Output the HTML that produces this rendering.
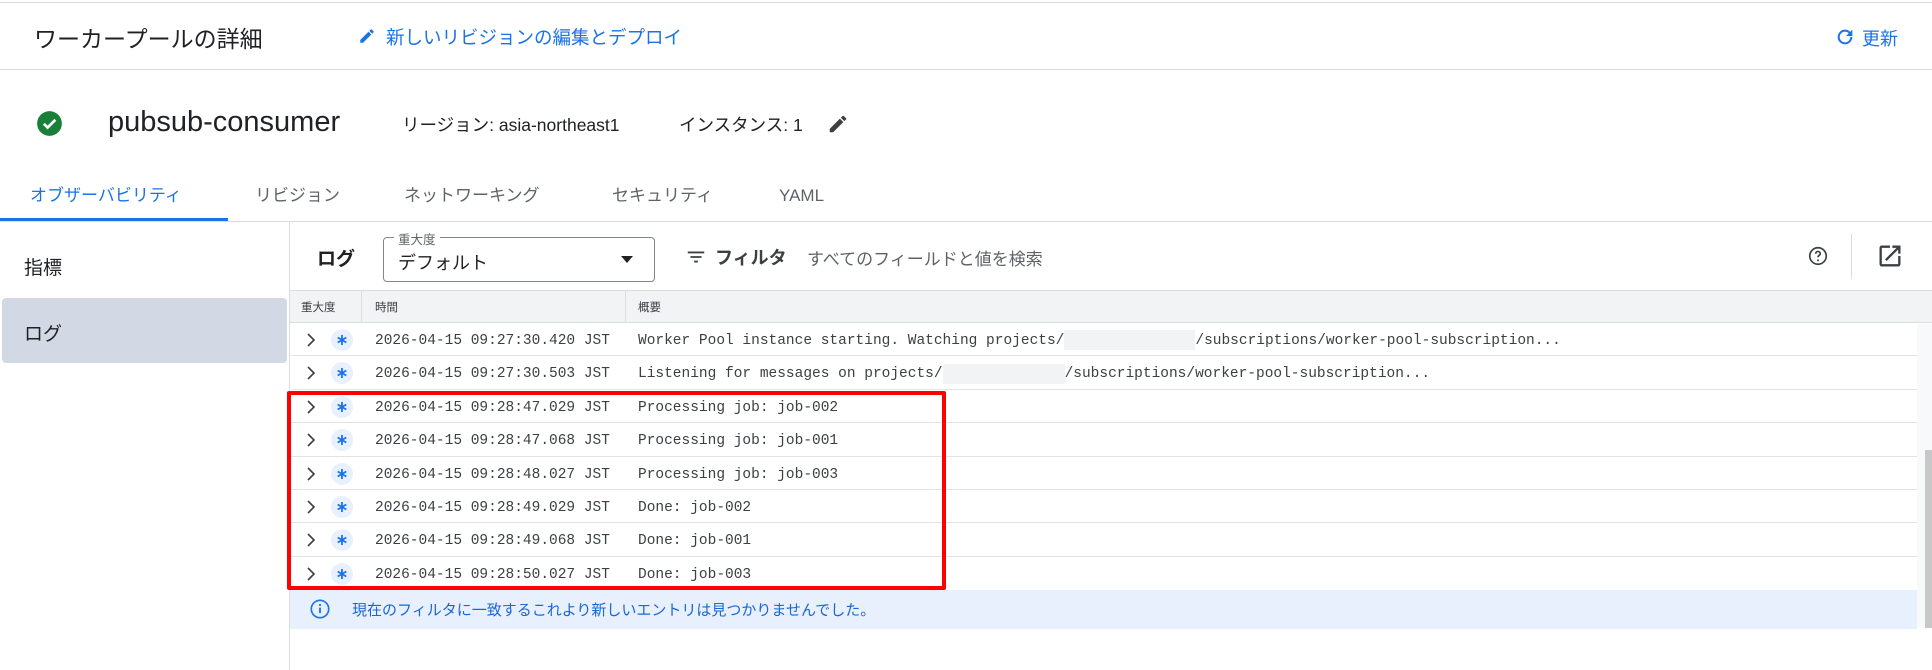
<!DOCTYPE html>
<html><head><meta charset="utf-8"><style>
*{box-sizing:border-box;margin:0;padding:0}
body{width:1932px;height:670px;overflow:hidden;background:#fff;font-family:"Liberation Sans","Noto Sans CJK JP",sans-serif;color:#202124;position:relative}
.a{position:absolute;white-space:nowrap}
.tab{position:absolute;top:184px;height:24px;line-height:24px;font-size:17px;color:#5f6368;white-space:nowrap}
.mono{font-family:"Liberation Mono","Noto Sans CJK JP",monospace;font-size:14.5px;color:#3c4043}
.row{position:absolute;left:291px;width:1626px;height:33.4px;border-bottom:1px solid #e3e3e3}
.row .chev{position:absolute;left:14px;top:9px}
.row .sev{position:absolute;left:40px;top:6px;width:22px;height:22px;border-radius:50%;background:#e8f0fe}
.row .sev svg{position:absolute;left:5px;top:5px}
.row .t{position:absolute;left:84px;top:2px;height:33px;line-height:33px}
.row .m{position:absolute;left:347px;top:2px;height:33px;line-height:33px}
</style></head><body>
<div class="a" style="left:0;top:2px;width:1932px;height:1px;background:#dadce0"></div>
<div class="a" style="left:34px;top:20px;font-size:23px;color:#202124">ワーカープールの詳細</div>
<svg class="a" style="left:358px;top:27px" width="18" height="18" viewBox="0 0 24 24"><path fill="#1a73e8" d="M3 17.25V21h3.75L17.81 9.94l-3.75-3.75L3 17.25zM20.71 7.04a1 1 0 000-1.41l-2.34-2.34a1 1 0 00-1.41 0l-1.83 1.83 3.75 3.75 1.83-1.83z"/></svg>
<div class="a" style="left:386px;top:24px;font-size:18.5px;color:#1a73e8">新しいリビジョンの編集とデプロイ</div>
<svg class="a" style="left:1834px;top:26px" width="22" height="22" viewBox="0 0 24 24"><path fill="#1a73e8" d="M17.65 6.35A7.96 7.96 0 0 0 12 4a8 8 0 1 0 8 8h-2.2a5.8 5.8 0 1 1-1.7-4.1L13 11h7V4l-2.35 2.35z"/></svg>
<div class="a" style="left:1862px;top:25px;font-size:18px;color:#1a73e8">更新</div>
<div class="a" style="left:0;top:69px;width:1932px;height:1px;background:#dadce0"></div>

<svg class="a" style="left:36px;top:110px" width="27" height="27" viewBox="0 0 24 24"><circle cx="12" cy="12" r="11" fill="#188038"/><path d="M7 12.3l3.3 3.3L17.2 8.7" stroke="#fff" stroke-width="2.4" fill="none"/></svg>
<div class="a" style="left:108px;top:106px;font-size:29px;color:#202124">pubsub-consumer</div>
<div class="a" style="left:402px;top:112px;font-size:17.5px">リージョン: asia-northeast1</div>
<div class="a" style="left:679px;top:112px;font-size:17.5px">インスタンス: 1</div>
<svg class="a" style="left:827px;top:113px" width="22" height="22" viewBox="0 0 24 24"><path fill="#3c4043" d="M3 17.25V21h3.75L17.81 9.94l-3.75-3.75L3 17.25zM20.71 7.04a1 1 0 000-1.41l-2.34-2.34a1 1 0 00-1.41 0l-1.83 1.83 3.75 3.75 1.83-1.83z"/></svg>

<div class="tab" style="left:30px;color:#1a73e8">オブザーバビリティ</div>
<div class="tab" style="left:255px">リビジョン</div>
<div class="tab" style="left:404px">ネットワーキング</div>
<div class="tab" style="left:612px">セキュリティ</div>
<div class="tab" style="left:779px;font-family:'Liberation Sans',sans-serif">YAML</div>
<div class="a" style="left:0;top:221px;width:1932px;height:1px;background:#dadce0"></div>
<div class="a" style="left:0;top:218px;width:228px;height:3px;background:#1a73e8"></div>

<div class="a" style="left:289px;top:222px;width:1px;height:448px;background:#dadce0"></div>
<div class="a" style="left:24px;top:253px;font-size:19px">指標</div>
<div class="a" style="left:2px;top:298px;width:285px;height:65px;background:#d3d9e4;border-radius:4px"></div>
<div class="a" style="left:24px;top:319px;font-size:19px">ログ</div>

<div class="a" style="left:317px;top:244px;font-size:19px;font-weight:bold">ログ</div>
<div class="a" style="left:383px;top:237px;width:272px;height:45px;border:1px solid #80868b;border-radius:4px"></div>
<div class="a" style="left:394px;top:229px;font-size:12.5px;color:#5f6368;background:#fff;padding:0 4px">重大度</div>
<div class="a" style="left:398px;top:249px;font-size:18px">デフォルト</div>
<svg class="a" style="left:620px;top:255px" width="14" height="10" viewBox="0 0 14 10"><path d="M1 1h12L7 8z" fill="#202124"/></svg>
<svg class="a" style="left:685px;top:246px" width="22" height="22" viewBox="0 0 24 24"><path fill="#3c4043" d="M3 6h18v2H3zM6 11h12v2H6zM10 16h4v2h-4z"/></svg>
<div class="a" style="left:715px;top:244px;font-size:18px;font-weight:bold;color:#3c4043">フィルタ</div>
<div class="a" style="left:807px;top:245px;font-size:17px;color:#5f6368">すべてのフィールドと値を検索</div>
<svg class="a" style="left:1807px;top:245px" width="22" height="22" viewBox="0 0 24 24"><circle cx="12" cy="12" r="9" stroke="#3c4043" stroke-width="1.8" fill="none"/><path d="M9.5 9.5a2.5 2.5 0 115 0c0 1.7-2.5 1.8-2.5 3.8" stroke="#3c4043" stroke-width="1.8" fill="none"/><circle cx="12" cy="16.8" r="1.1" fill="#3c4043"/></svg>
<div class="a" style="left:1851px;top:234px;width:1px;height:45px;background:#dadce0"></div>
<svg class="a" style="left:1876px;top:242px" width="28" height="28" viewBox="0 0 24 24"><path fill="#3c4043" d="M19 19H5V5h7V3H5a2 2 0 00-2 2v14a2 2 0 002 2h14a2 2 0 002-2v-7h-2v7zM14 3v2h3.59l-9.83 9.83 1.41 1.41L19 6.41V10h2V3h-7z"/></svg>

<div class="a" style="left:290px;top:290px;width:1642px;height:33px;background:#f1f3f4;border-top:1px solid #dadce0;border-bottom:1px solid #dadce0"></div>
<div class="a" style="left:301px;top:299px;font-size:11.5px;color:#3c4043">重大度</div>
<div class="a" style="left:361px;top:291px;width:1px;height:31px;background:#dadce0"></div>
<div class="a" style="left:375px;top:299px;font-size:11.5px;color:#3c4043">時間</div>
<div class="a" style="left:625px;top:291px;width:1px;height:31px;background:#dadce0"></div>
<div class="a" style="left:638px;top:299px;font-size:11.5px;color:#3c4043">概要</div>

<div class="a" style="left:1917px;top:324px;width:15px;height:304px;background:#f8f9fa"></div>
<div class="a" style="left:1925px;top:450px;width:7px;height:178px;background:#c8c8c8"></div>

<svg width="0" height="0" style="position:absolute"><defs><symbol id="ast" viewBox="0 0 12 12"><path d="M6 1v10M1.7 3.5l8.6 5M1.7 8.5l8.6-5" stroke="#1a73e8" stroke-width="1.8"/></symbol><symbol id="chv" viewBox="0 0 12 16"><path d="M3 2l6 6-6 6" stroke="#3c4043" stroke-width="1.6" fill="none"/></symbol></defs></svg>

<div class="row mono" style="top:323px"><svg class="chev" width="12" height="16"><use href="#chv"/></svg><div class="sev"><svg width="12" height="12"><use href="#ast"/></svg></div><div class="t">2026-04-15 09:27:30.420 JST</div><div class="m">Worker Pool instance starting. Watching projects/<span style="display:inline-block;width:131px;height:20px;background:#f1f3f4;vertical-align:middle"></span>/subscriptions/worker-pool-subscription...</div></div>
<div class="row mono" style="top:356.4px"><svg class="chev" width="12" height="16"><use href="#chv"/></svg><div class="sev"><svg width="12" height="12"><use href="#ast"/></svg></div><div class="t">2026-04-15 09:27:30.503 JST</div><div class="m">Listening for messages on projects/<span style="display:inline-block;width:122px;height:20px;background:#f1f3f4;vertical-align:middle"></span>/subscriptions/worker-pool-subscription...</div></div>
<div class="row mono" style="top:389.8px"><svg class="chev" width="12" height="16"><use href="#chv"/></svg><div class="sev"><svg width="12" height="12"><use href="#ast"/></svg></div><div class="t">2026-04-15 09:28:47.029 JST</div><div class="m">Processing job: job-002</div></div>
<div class="row mono" style="top:423.2px"><svg class="chev" width="12" height="16"><use href="#chv"/></svg><div class="sev"><svg width="12" height="12"><use href="#ast"/></svg></div><div class="t">2026-04-15 09:28:47.068 JST</div><div class="m">Processing job: job-001</div></div>
<div class="row mono" style="top:456.6px"><svg class="chev" width="12" height="16"><use href="#chv"/></svg><div class="sev"><svg width="12" height="12"><use href="#ast"/></svg></div><div class="t">2026-04-15 09:28:48.027 JST</div><div class="m">Processing job: job-003</div></div>
<div class="row mono" style="top:490px"><svg class="chev" width="12" height="16"><use href="#chv"/></svg><div class="sev"><svg width="12" height="12"><use href="#ast"/></svg></div><div class="t">2026-04-15 09:28:49.029 JST</div><div class="m">Done: job-002</div></div>
<div class="row mono" style="top:523.4px"><svg class="chev" width="12" height="16"><use href="#chv"/></svg><div class="sev"><svg width="12" height="12"><use href="#ast"/></svg></div><div class="t">2026-04-15 09:28:49.068 JST</div><div class="m">Done: job-001</div></div>
<div class="row mono" style="top:556.8px;border-bottom:none"><svg class="chev" width="12" height="16"><use href="#chv"/></svg><div class="sev"><svg width="12" height="12"><use href="#ast"/></svg></div><div class="t">2026-04-15 09:28:50.027 JST</div><div class="m">Done: job-003</div></div>

<div class="a" style="left:290px;top:590px;width:1627px;height:39px;background:#e8f0fe"></div>
<svg class="a" style="left:309px;top:598px" width="22" height="22" viewBox="0 0 24 24"><circle cx="12" cy="12" r="9.5" stroke="#1a73e8" stroke-width="1.8" fill="none"/><path d="M12 10.5v6" stroke="#1a73e8" stroke-width="2"/><circle cx="12" cy="7.6" r="1.2" fill="#1a73e8"/></svg>
<div class="a" style="left:352px;top:599px;font-size:15px;color:#1967d2">現在のフィルタに一致するこれより新しいエントリは見つかりませんでした。</div>

<div class="a" style="left:287px;top:391px;width:659px;height:199px;border:4px solid #ff0000;border-radius:2px"></div>
</body></html>
